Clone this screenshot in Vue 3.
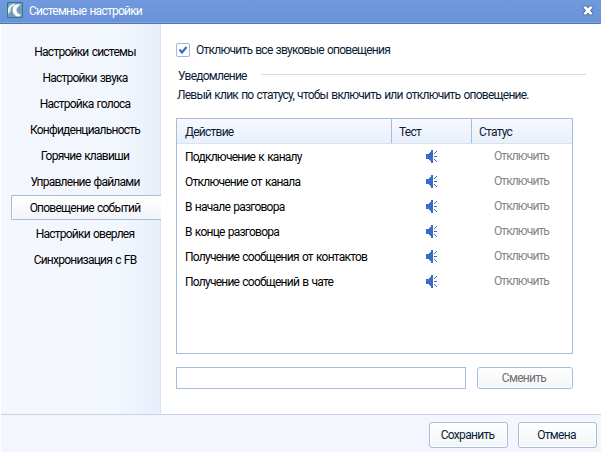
<style scoped>
.window {
  display: flex;
  flex-direction: column;
  box-sizing: border-box;
  width: 601px;
  height: 453px;
  padding: 0 0 1px 1px;
  background: #fff;
  color: #0a1c36;
  font-family: Roboto, "Liberation Sans", sans-serif;
  font-size: 12px;
  letter-spacing: -0.76px;
  word-spacing: 0.9px;
  line-height: 16px;
  white-space: nowrap;
}

/* title bar */
.titlebar {
  display: flex;
  align-items: center;
  box-sizing: border-box;
  height: 24px;
  margin-left: -1px;
  padding: 0 7px 2px 7px;
  background: linear-gradient(#7099de, #6a92d8);
  border-bottom: 1px solid #4c76bb;
  box-shadow: inset 0 -1px 0 #86a8e2;
  color: #fff;
}
.logo {
  display: block;
  width: 16px;
  height: 16px;
  margin-top: -2px;
}
.title {
  flex: 1;
  padding-left: 6px;
}
.close {
  display: block;
  width: 12px;
  height: 11px;
  margin-top: -1px;
}

.body {
  display: flex;
  height: 390px;
}

/* left menu */
.menu {
  box-sizing: border-box;
  width: 160px;
  padding-top: 15px;
  border-right: 1px solid #d6e2f7;
  background: linear-gradient(to right, #f4f7fd 0, #f2f6fd 120px, #e8eefa 160px);
  color: #000;
}
.menu-item {
  box-sizing: border-box;
  height: 26px;
  padding-left: 9px;
  line-height: 27px;
  text-align: center;
  cursor: pointer;
}
.menu-item.active {
  height: 25px;
  margin: 0 -1px 1px 10px;
  padding: 0 3px 0 0;
  border: 1px solid #a5bce0;
  border-right: none;
  border-radius: 2px 0 0 2px;
  background: linear-gradient(#fff, #f1f5f7);
  box-shadow: inset 1px 1px 0 #fff;
  line-height: 25px;
}

/* right part */
.content {
  flex: 1;
  padding: 18px 28px 0 15px;
}
.check {
  display: flex;
  align-items: center;
  height: 15px;
}
.box {
  box-sizing: border-box;
  width: 14px;
  height: 14px;
  margin-right: 6px;
  border: 1px solid #9db8e2;
  border-radius: 2px;
  background: #fff;
}
.box svg {
  display: block;
}
.legend {
  display: flex;
  align-items: center;
  margin-top: 11px;
  padding-left: 2px;
}
.legend i {
  flex: 1;
  height: 1px;
  margin: 0 -13px 3px 14px;
  background: #cddcf0;
}
.hint {
  margin-top: 3px;
  padding-left: 1px;
}
.table {
  box-sizing: border-box;
  width: 397px;
  height: 236px;
  margin-top: 15px;
  border: 1px solid #a5bce0;
}
.row {
  display: grid;
  grid-template-columns: 214px 80px 1fr;
  grid-template-rows: 25px;
  line-height: 26px;
  color: #000;
}
.head {
  grid-template-rows: 24px;
  border-bottom: 1px solid #d6e2f2;
  background: linear-gradient(#f6f9fe, #e9f0fa);
  color: #0a1c36;
}
.row > div {
  padding-left: 8px;
}
.head > div + div {
  padding-left: 7px;
  border-left: 1px solid #a5bce0;
}
.row .test {
  padding: 6px 0 0 35px;
}
.test svg {
  display: block;
}
.row .status {
  padding-left: 23px;
  color: #858585;
  letter-spacing: -0.9px;
  line-height: 25px;
}
.change {
  display: flex;
  gap: 11px;
  margin-top: 13px;
}
.field {
  box-sizing: border-box;
  width: 290px;
  height: 22px;
  padding: 0 4px;
  border: 1px solid #a5bce0;
  outline: none;
}
.btn {
  box-sizing: border-box;
  width: 79px;
  height: 26px;
  padding: 0 2px 0 0;
  border: 1px solid #a5bce0;
  border-radius: 3px;
  background: linear-gradient(#fff, #f2f5f6);
  box-shadow: inset 0 0 0 1px #fff;
  color: #0a1c36;
  font: inherit;
  letter-spacing: -0.7px;
}
.btn.disabled {
  width: 96px;
  height: 22px;
  color: #6f6f6f;
}

/* bottom buttons */
.footer {
  display: flex;
  justify-content: flex-end;
  gap: 10px;
  flex: 1;
  padding: 7px 4px 0 0;
  border-top: 1px solid #c5d1e8;
  background: #f3f6fc;
}
</style>

<style>
body {
  overflow: hidden;
}
</style>

<template>
  <div class="window">
    <div class="titlebar">
      <svg class="logo" viewBox="0 0 16 16">
        <rect width="16" height="16" rx="1" fill="#35768f" />
        <rect x="1" y="1" width="14" height="14" fill="#6f9fb4" />
        <path d="M1 6.500Q3 1.500 8.500 1.500L7 3.500Q3 5 3.500 9.500L1 12Z" fill="#e6f1f4" />
        <path d="M14 2.500Q6 1.500 5.500 7.500Q5.500 13 11 14.800L14.500 13Q9.500 11.500 9.500 8Q9.500 5 14 2.500Z" fill="#fff" />
      </svg>
      <div class="title">Системные настройки</div>
      <svg class="close" viewBox="0 0 12 11">
        <path d="M1.500 1.500H4.500L6 3.500L7.500 1.500H10.500V2.500L8 5.500L10.500 8.500V9.500H7.500L6 7.500L4.500 9.500H1.500V8.500L4 5.500L1.500 2.500Z" fill="#fff" stroke="#45659f" stroke-width="1.600" paint-order="stroke" stroke-linejoin="round" />
      </svg>
    </div>

    <div class="body">
      <div class="menu">
        <div
          v-for="item in menu"
          :key="item"
          class="menu-item"
          :class="{ active: item === selectedItem }"
          @click="selectedItem = item">
          {{ item }}
        </div>
      </div>

      <div class="content">
        <div class="check" @click="muted = !muted">
          <div class="box">
            <svg v-if="muted" width="12" height="12" viewBox="0 0 12 12">
              <path d="M2.500 5.500L5 8.500L9.500 3" fill="none" stroke="#3a6cc6" stroke-width="2.200" />
            </svg>
          </div>
          <span>Отключить все звуковые оповещения</span>
        </div>
        <div class="legend"><span>Уведомление</span><i></i></div>
        <div class="hint">Левый клик по статусу, чтобы включить или отключить оповещение.</div>

        <div class="table">
          <div class="row head">
            <div>Действие</div>
            <div>Тест</div>
            <div>Статус</div>
          </div>
          <div v-for="event in events" :key="event" class="row">
            <div>{{ event }}</div>
            <div class="test">
              <svg width="12" height="13" viewBox="0 0 12 13" fill="#3a6cc6" shape-rendering="crispEdges">
                <path d="M0 4H3V3H4V2H5V0H7V13H5V11H4V10H3V9H0Z" />
                <path d="M8 3H9V2H10V1H11V2H10V3H9V4H8ZM8 6H11V7H8ZM8 9H9V10H10V11H11V12H10V11H9V10H8Z" />
              </svg>
            </div>
            <div class="status">Отключить</div>
          </div>
        </div>

        <div class="change">
          <input v-model="path" class="field" type="text" />
          <button class="btn disabled">Сменить</button>
        </div>
      </div>
    </div>

    <div class="footer">
      <button class="btn">Сохранить</button>
      <button class="btn">Отмена</button>
    </div>
  </div>
</template>

<script setup>
import { ref } from 'vue';

const menu = [
  'Настройки системы',
  'Настройки звука',
  'Настройка голоса',
  'Конфиденциальность',
  'Горячие клавиши',
  'Управление файлами',
  'Оповещение событий',
  'Настройки оверлея',
  'Синхронизация с FB'
];
const events = [
  'Подключение к каналу',
  'Отключение от канала',
  'В начале разговора',
  'В конце разговора',
  'Получение сообщения от контактов',
  'Получение сообщений в чате'
];

const selectedItem = ref('Оповещение событий');
const muted = ref(true);
const path = ref('');
</script>
